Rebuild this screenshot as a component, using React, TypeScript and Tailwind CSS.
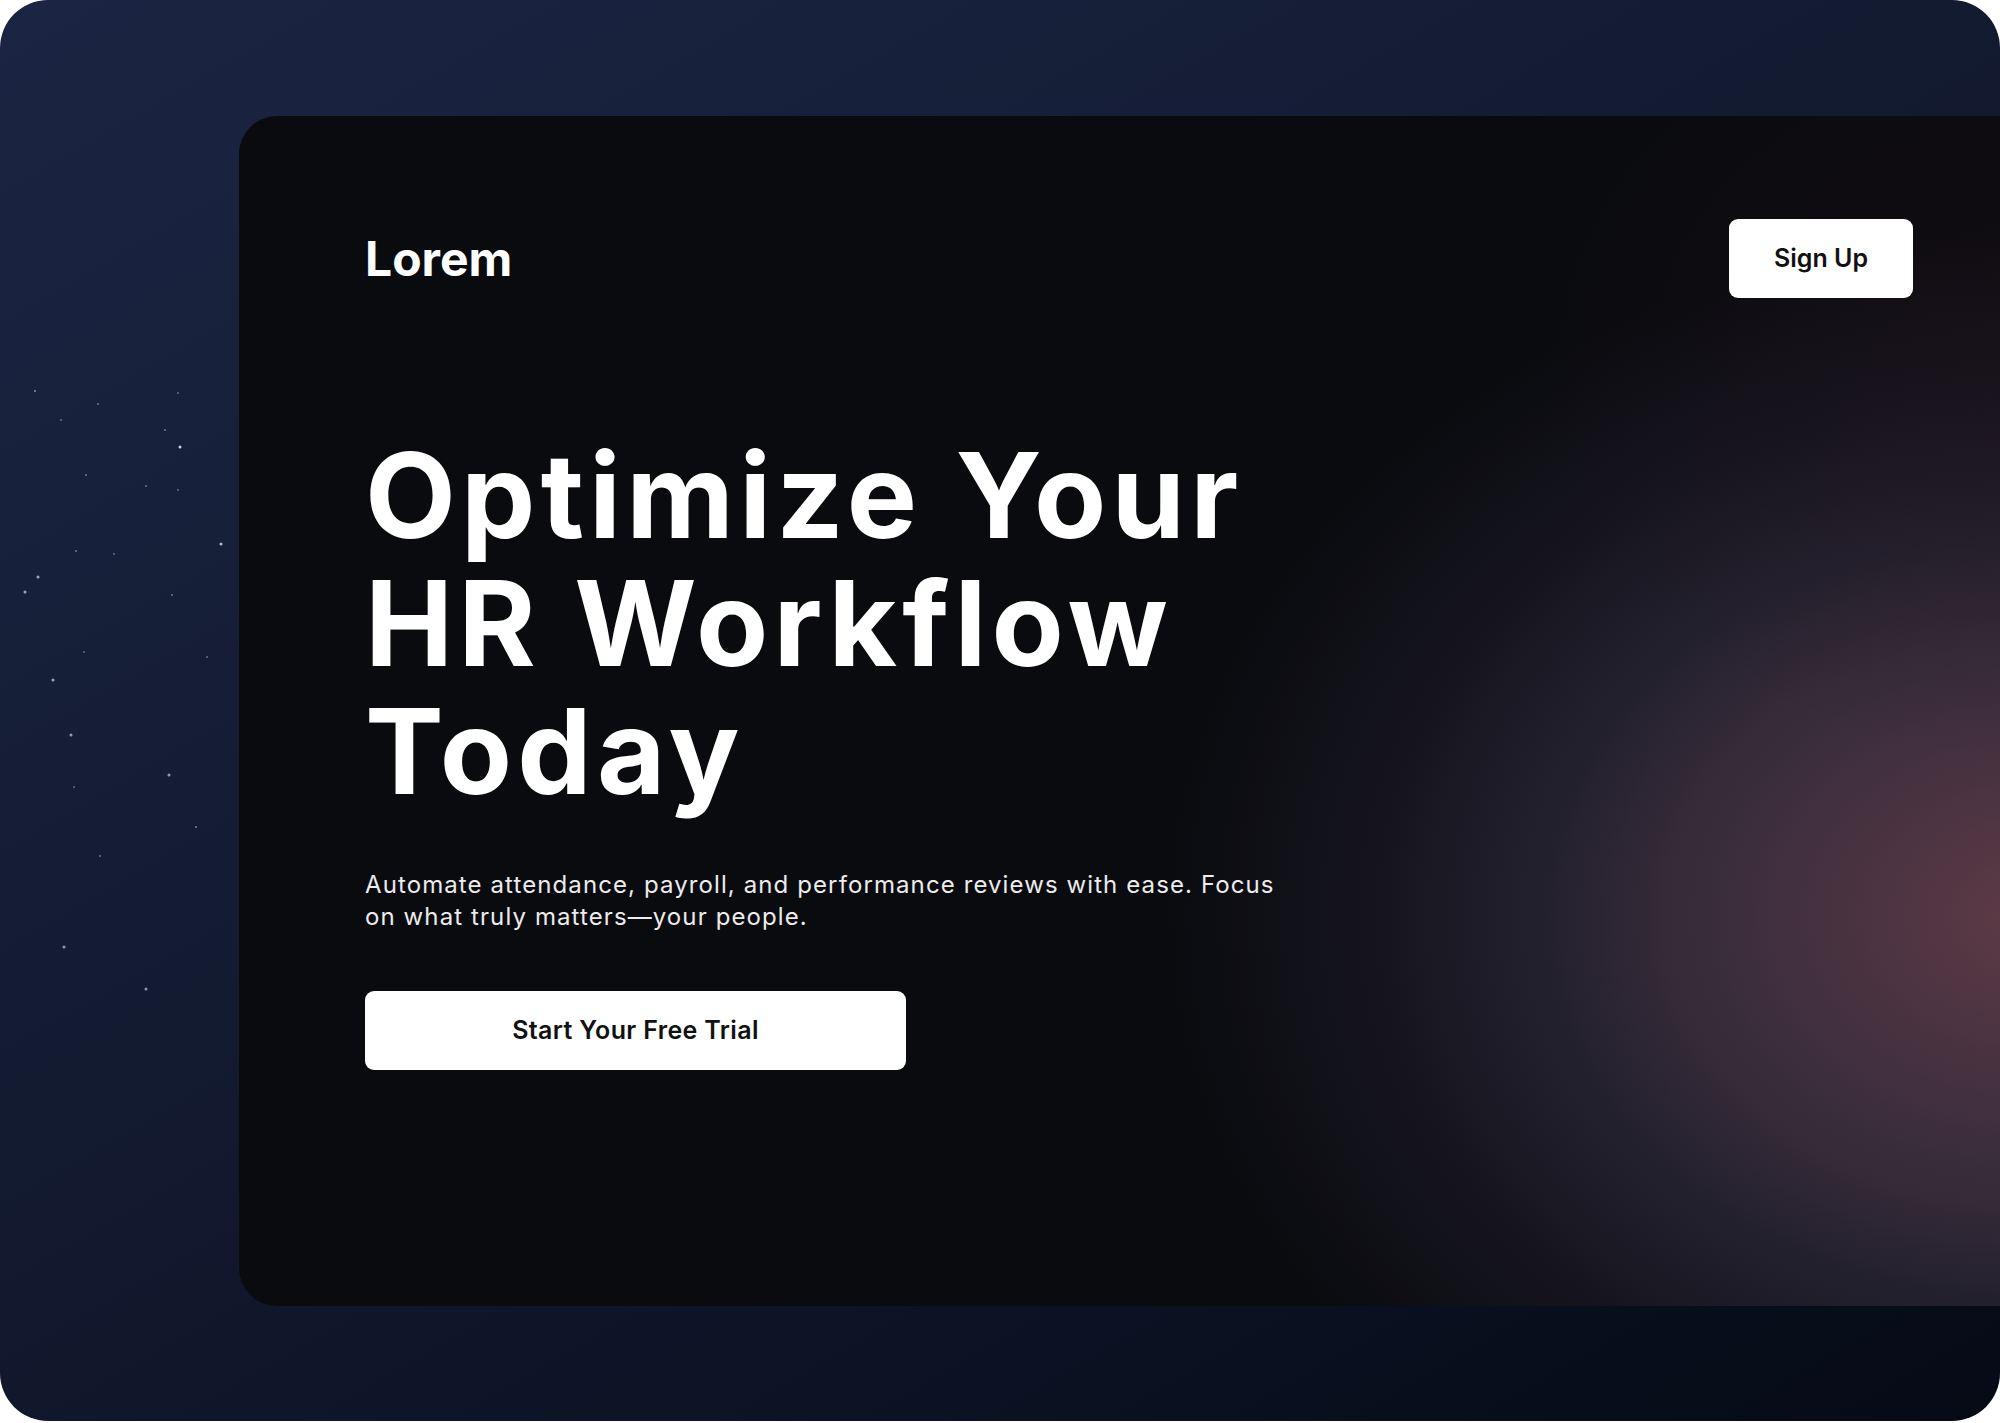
import React from "react";

const stars: [number, number, number, number][] = [
  [35, 391, 1, 0.5], [98, 404, 1, 0.4], [61, 420, 1, 0.35], [178, 393, 1, 0.35],
  [165, 430, 1, 0.4], [180, 447, 1.5, 0.8], [86, 475, 1, 0.4], [146, 486, 1, 0.4],
  [178, 490, 1, 0.35], [221, 544, 1.5, 0.7], [76, 551, 1, 0.4], [114, 554, 1, 0.35],
  [38, 577, 1.5, 0.6], [25, 592, 1.5, 0.6], [172, 595, 1, 0.4], [84, 652, 1, 0.35],
  [207, 657, 1, 0.35], [53, 680, 1.5, 0.6], [71, 735, 1.5, 0.55], [169, 775, 1.5, 0.55],
  [74, 787, 1, 0.35], [196, 827, 1, 0.45], [100, 856, 1, 0.4], [64, 947, 1.5, 0.55],
  [146, 989, 1.5, 0.55],
];

export default function App() {
  return (
    <div className="w-[2000px] h-[1423px] bg-white" style={{ fontFamily: "Inter, 'Noto Sans', sans-serif" }}>
      <div className="relative w-[2000px] h-[1421px] overflow-hidden rounded-[48px] bg-[linear-gradient(150deg,#1b2543_0%,#141c33_40%,#0c1223_75%,#050a15_100%)] pt-[116px]">
        <svg className="absolute left-0 top-0 pointer-events-none" width="240" height="1100">
          {stars.map(([x, y, r, o], i) => (
            <circle key={i} cx={x} cy={y} r={r} fill="#ffffff" opacity={o} />
          ))}
        </svg>
        <div className="relative ml-[239px] w-[1800px] h-[1190px] rounded-l-[38px] bg-[#0a0b0f] overflow-hidden">
          <div className="absolute inset-0 bg-[radial-gradient(ellipse_860px_680px_at_1790px_800px,rgb(94,58,70)_0%,rgb(72,50,64)_22%,rgb(56,44,58)_39%,rgb(36,33,47)_56%,rgb(22,21,31)_75%,rgba(10,11,15,0)_100%)]" />
          <div className="absolute inset-0 bg-[radial-gradient(ellipse_500px_400px_at_1800px_250px,rgba(36,18,26,0.35)_0%,rgba(10,11,15,0)_100%)]" />
          <div className="relative flex flex-col pt-[103px] pl-[126px] pr-[126px]">
            <div className="flex items-center justify-between h-[79px]">
              <div className="text-white text-[48px] font-bold leading-none">Lorem</div>
              <button className="w-[184px] h-[79px] rounded-[9px] bg-white text-[#111111] text-[25px] font-semibold">
                Sign Up
              </button>
            </div>
            <h1 className="mt-[133px] text-white text-[118px] font-bold leading-[128px] tracking-[5.2px]">
              Optimize Your
              <br />
              HR Workflow
              <br />
              Today
            </h1>
            <p className="mt-[54px] w-[925px] text-[#ececec] text-[24px] leading-[32px] font-normal tracking-[1.1px]">
              Automate attendance, payroll, and performance reviews with ease. Focus on what truly matters—your people.
            </p>
            <button className="mt-[58px] w-[541px] h-[79px] rounded-[9px] bg-white text-[#111111] text-[25px] font-semibold tracking-[0.35px]">
              Start Your Free Trial
            </button>
          </div>
        </div>
      </div>
    </div>
  );
}
